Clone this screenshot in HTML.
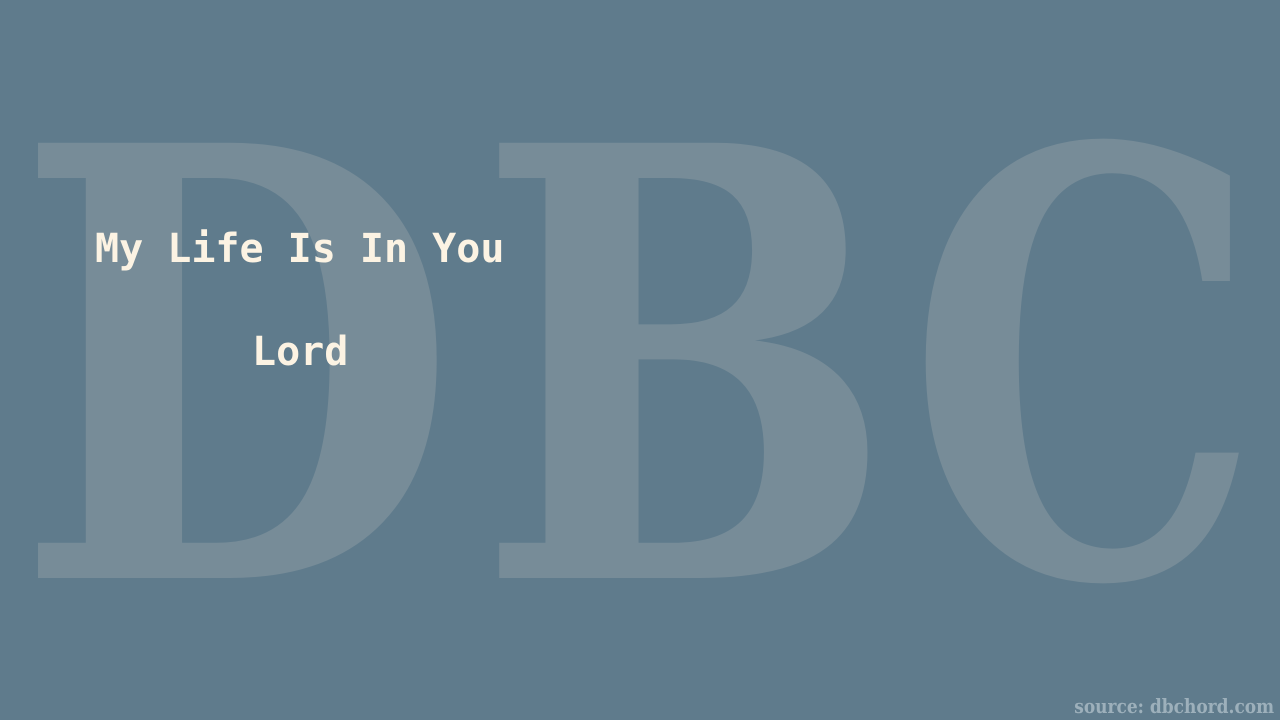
<!DOCTYPE html>
<html><head><meta charset="utf-8"><style>
html,body{margin:0;padding:0;width:1280px;height:720px;overflow:hidden;background:#5f7b8c}
svg{position:absolute;left:0;top:0}
.t{position:absolute;font-family:"DejaVu Sans Mono","Liberation Mono",monospace;font-weight:bold;font-size:40px;color:#fcf3e3;white-space:nowrap;line-height:1}
.s{position:absolute;right:6px;top:696px;font-family:"DejaVu Serif","Liberation Serif",serif;font-weight:bold;font-size:20px;color:#9db0bb;line-height:1;transform:scaleX(0.85);transform-origin:right top;white-space:nowrap}
</style></head><body>
<svg width="1280" height="720">
<g font-family="DejaVu Serif, Liberation Serif, serif" font-weight="bold" font-size="597" fill="#778c98">
<text x="0" y="578" transform="translate(14,0) scale(0.858,1)">D</text>
<text x="0" y="578" transform="translate(476,0) scale(0.83,1)">B</text>
<text x="0" y="0" transform="translate(907,575) scale(0.746,0.985)">C</text>
</g>
</svg>
<div class="t" style="left:95px;top:229px">My Life Is In You</div>
<div class="t" style="left:252px;top:332px">Lord</div>
<div class="s">source: dbchord.com</div>
</body></html>
